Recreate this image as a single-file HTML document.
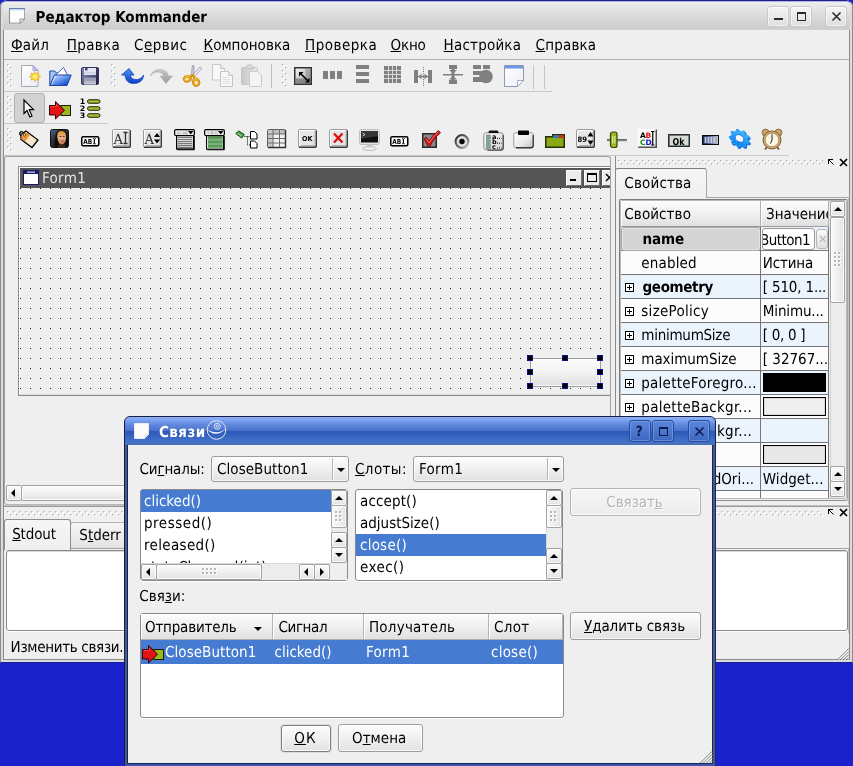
<!DOCTYPE html>
<html lang="ru"><head><meta charset="utf-8"><title>Редактор Kommander</title>
<style>
*{box-sizing:border-box;margin:0;padding:0}
html,body{width:853px;height:766px;overflow:hidden}
body{background:#1a22cc;font:15px "DejaVu Sans Condensed","DejaVu Sans","Liberation Sans",sans-serif;text-rendering:geometricPrecision;color:#000;position:relative}
#root{position:absolute;left:0;top:0;width:853px;height:766px;will-change:transform}
.a{position:absolute}
.t{position:absolute;white-space:nowrap;line-height:18px;height:18px}
u{text-decoration:underline;text-underline-offset:0.7px;text-decoration-thickness:1px}
.b{font-weight:bold}
.btn{position:absolute;border:1px solid #9c9c9c;border-radius:3px;background:linear-gradient(#fdfdfd,#f1f1f1 45%,#e2e2e2);box-shadow:inset 0 0 0 1px rgba(255,255,255,.75);text-align:center;white-space:nowrap}
.sb{position:absolute;border:1px solid #a2a2a2;border-radius:2px;background:linear-gradient(#fbfbfb,#e3e3e3);box-shadow:inset 0 0 0 1px rgba(255,255,255,.8)}
.sbh{position:absolute;border:1px solid #a2a2a2;border-radius:2px;background:linear-gradient(90deg,#fbfbfb,#e3e3e3);box-shadow:inset 0 0 0 1px rgba(255,255,255,.8)}
.tri{position:absolute;width:0;height:0;border-style:solid}
.hd{position:absolute;background:linear-gradient(#fcfcfc,#f0f0f0 50%,#e0e0e0);border-right:1px solid #b4b4b4;border-bottom:1px solid #b0b0b0;box-shadow:inset 1px 1px 0 #fff}
.sel{background:#4a7ac8;color:#fff}
.ic{position:absolute;overflow:visible}
</style></head>
<body>
<div id="root">
<svg class="a" width="0" height="0" style="left:0;top:0"><defs><pattern id="hp" width="6" height="6" patternUnits="userSpaceOnUse"><rect x="1" y="1" width="2" height="2" fill="#fdfdfd"/><rect x="0" y="0" width="1" height="1" fill="#b2b2b2"/><rect x="1" y="0" width="1" height="1" fill="#d4d4d4"/><rect x="0" y="1" width="1" height="1" fill="#d4d4d4"/><rect x="4" y="4" width="2" height="2" fill="#fdfdfd"/><rect x="3" y="3" width="1" height="1" fill="#b2b2b2"/><rect x="4" y="3" width="1" height="1" fill="#d4d4d4"/><rect x="3" y="4" width="1" height="1" fill="#d4d4d4"/></pattern></defs></svg>
<div class="a" style="left:0px;top:0px;width:853px;height:663px;background:#efefef;border-radius:7px 7px 0 0;overflow:hidden"></div>
<div class="a" style="left:0px;top:0px;width:853px;height:663px;border-radius:7px 7px 0 0;border:1px solid #8c8c8c;border-top-color:#20208c;border-bottom-color:#1c1c9c;pointer-events:none"></div>
<div class="a" style="left:1px;top:1px;width:851px;height:661px;border-radius:6px 6px 0 0;border:2px solid #dcdcdc;border-top:1px solid #b0b0e0"></div>
<div class="a" style="left:3px;top:30px;width:847px;height:630px;border:1px solid #8c8c8c;border-top:none"></div>
<div class="a" style="left:3px;top:2px;width:847px;height:28px;background:linear-gradient(#eef0f8,#e9ebea 8%,#e3e3e5 30%,#dcdcdc 45%,#d0d0d0 82%,#cdcdcd);border-radius:4px 4px 0 0"></div>
<div class="a" style="left:1px;top:29px;width:851px;height:1px;background:#d2d2d2"></div>
<svg class="ic" style="left:9px;top:8px" width="16" height="16" viewBox="0 0 16 16"><path d="M0.500 0.500h15v10.500l-4 4h-11z" fill="#fefefe" stroke="#a4a4a8"/><rect x="0" y="0" width="16" height="1" fill="#6c78b4"/><rect x="1" y="1" width="14" height="1.500" fill="#d0d8f4"/><path d="M15.500 11h-4.500v4.500z" fill="#e8e8f0" stroke="#8c8c94" stroke-width=".9"/><rect x="0" y="1" width="1" height="14.500" fill="#8a8a8a"/></svg>
<div class="t " style="left:35.5px;top:8px;font-weight:bold">Редактор Kommander</div>
<div class="a" style="left:767px;top:6px;width:22px;height:21px;border:1px solid #c9c9c9;border-radius:3px;background:linear-gradient(#f4f4f4,#dedede);box-shadow:inset 0 0 0 1px rgba(255,255,255,.6)"></div>
<svg class="ic" style="left:767.5px;top:6px" width="21" height="21" viewBox="0 0 21 21"><rect x="6" y="12" width="9" height="2" fill="#2a2a2a"/></svg>
<div class="a" style="left:790px;top:6px;width:22px;height:21px;border:1px solid #c9c9c9;border-radius:3px;background:linear-gradient(#f4f4f4,#dedede);box-shadow:inset 0 0 0 1px rgba(255,255,255,.6)"></div>
<svg class="ic" style="left:790.5px;top:6px" width="21" height="21" viewBox="0 0 21 21"><rect x="6.5" y="6.5" width="8" height="8" fill="none" stroke="#2a2a2a"/><rect x="6" y="6" width="9" height="2" fill="#2a2a2a"/></svg>
<div class="a" style="left:825px;top:6px;width:22px;height:21px;border:1px solid #c9c9c9;border-radius:3px;background:linear-gradient(#f4f4f4,#dedede);box-shadow:inset 0 0 0 1px rgba(255,255,255,.6)"></div>
<svg class="ic" style="left:825.5px;top:6px" width="21" height="21" viewBox="0 0 21 21"><path d="M6.5 6.5l8 8M14.5 6.5l-8 8" stroke="#2a2a2a" stroke-width="1.6"/></svg>
<div class="t " style="left:11px;top:35.5px;;letter-spacing:0.23px"><u>Ф</u>айл</div>
<div class="t " style="left:66.8px;top:35.5px;;letter-spacing:0.32px"><u>П</u>равка</div>
<div class="t " style="left:134px;top:35.5px;;letter-spacing:0.48px">С<u>е</u>рвис</div>
<div class="t " style="left:203.5px;top:35.5px;;letter-spacing:0.03px"><u>К</u>омпоновка</div>
<div class="t " style="left:305px;top:35.5px;;letter-spacing:0.50px"><u>П</u>роверка</div>
<div class="t " style="left:390.5px;top:35.5px;;letter-spacing:-0.17px"><u>О</u>кно</div>
<div class="t " style="left:443.6px;top:35.5px;;letter-spacing:0.21px"><u>Н</u>астройка</div>
<div class="t " style="left:535.6px;top:35.5px;;letter-spacing:0.17px"><u>С</u>правка</div>
<div class="a" style="left:4px;top:59px;width:845px;height:1px;background:#b2b2b2"></div>
<div class="a" style="left:4px;top:91px;width:548px;height:1px;background:#c8c8c8"></div>
<div class="a" style="left:4px;top:123px;width:104px;height:1px;background:#c8c8c8"></div>
<div class="a" style="left:4px;top:155px;width:785px;height:1px;background:#c8c8c8"></div>
<svg class="a" style="left:7px;top:64px" width="5" height="24"><rect width="5" height="24" fill="url(#hp)"/></svg>
<svg class="a" style="left:111px;top:64px" width="5" height="24"><rect width="5" height="24" fill="url(#hp)"/></svg>
<svg class="a" style="left:282px;top:64px" width="5" height="24"><rect width="5" height="24" fill="url(#hp)"/></svg>
<svg class="a" style="left:7px;top:96px" width="5" height="24"><rect width="5" height="24" fill="url(#hp)"/></svg>
<svg class="a" style="left:7px;top:128px" width="5" height="24"><rect width="5" height="24" fill="url(#hp)"/></svg>
<svg class="ic" style="left:21px;top:65px" width="19" height="22" viewBox="0 0 19 22"><defs><linearGradient id="pg" x1="0" y1="0" x2="1" y2="1"><stop offset="0" stop-color="#fff"/><stop offset="1" stop-color="#ececf6"/></linearGradient><radialGradient id="st" cx=".5" cy=".5" r=".5"><stop offset="0" stop-color="#fff8a0"/><stop offset=".55" stop-color="#f8d838"/><stop offset="1" stop-color="#eca820"/></radialGradient></defs><path d="M0.500 0.500h11.500l5 5v16h-16.500z" fill="url(#pg)" stroke="#a8a8b0"/><path d="M12 0.500v5h5z" fill="#c8c0f0" stroke="#9c94cc" stroke-width=".8"/><path d="M14 6.500l1.300 2.300l2.500-.800l-.300 2.600l2.300 1l-2.300 1l.300 2.600l-2.500-.800l-1.300 2.300l-1.300-2.300l-2.500 .800l.300-2.600l-2.300-1l2.300-1l-.300-2.600l2.500 .800z" fill="url(#st)" stroke="#e8a828" stroke-width=".6"/></svg>
<svg class="ic" style="left:49px;top:66px" width="23" height="21" viewBox="0 0 23 21"><defs><linearGradient id="fo" x1="0" y1="0" x2="1" y2="1"><stop offset="0" stop-color="#f4f8ff"/><stop offset=".45" stop-color="#6c9cf0"/><stop offset=".8" stop-color="#1c54d0"/><stop offset="1" stop-color="#1444b8"/></linearGradient></defs><path d="M0.800 19.500v-14.500h5l1.500 2h9.500v4" fill="#a4c4f4" stroke="#1c48a8" stroke-width="1"/><path d="M5.500 10l9-8.500l3.500 6.500v4z" fill="#fff" stroke="#2c58b8" stroke-width=".9"/><path d="M0.800 19.500l4.700-10.500h16.700l-4.200 10.500z" fill="url(#fo)" stroke="#1840a0" stroke-width="1"/><path d="M2.500 18.500l4-8.500" stroke="#fff" stroke-width=".8" opacity=".8"/></svg>
<svg class="ic" style="left:81px;top:67px" width="18" height="18" viewBox="0 0 18 18"><defs><linearGradient id="sv" x1="0" y1="0" x2="1" y2="1"><stop offset="0" stop-color="#8890b8"/><stop offset=".6" stop-color="#50587c"/><stop offset="1" stop-color="#1c1c44"/></linearGradient><linearGradient id="sh" x1="0" y1="0" x2="0" y2="1"><stop offset="0" stop-color="#9898b0"/><stop offset="1" stop-color="#d8d8e4"/></linearGradient></defs><rect x="0.500" y="0.500" width="17" height="17" rx="1.500" fill="url(#sv)" stroke="#34345c"/><rect x="3" y="1" width="12" height="7" fill="#e4e4f2"/><rect x="4" y="1" width="2.500" height="2.500" fill="#44446c"/><rect x="3" y="5.500" width="12" height="1" fill="#c4c4d8"/><rect x="3" y="10.500" width="12" height="7" fill="url(#sh)"/><rect x="3" y="12.500" width="12" height="1" fill="#8888a4"/><rect x="3" y="15" width="12" height="1" fill="#b0b0c4"/><rect x="15" y="1" width="2" height="16" fill="#1c1c44" opacity=".55"/></svg>
<svg class="ic" style="left:121px;top:68px" width="23" height="16" viewBox="0 0 23 16"><defs><linearGradient id="ud" x1="0" y1="0" x2="0" y2="1"><stop offset="0" stop-color="#4c94f4"/><stop offset="1" stop-color="#0c40c8"/></linearGradient></defs><path d="M0.500 7l7.500-6.500l5 6.500h-3.500c0 3 3 5 7 4.500c3-0.500 5-2.500 6-4.500c0 5-4 8.500-10 8.500c-5 0-8-3-8.500-8.500z" fill="url(#ud)" stroke="#1444b8" stroke-width=".8"/></svg>
<svg class="ic" style="left:150px;top:69px" width="23" height="15" viewBox="0 0 23 15"><defs><linearGradient id="rd" x1="0" y1="0" x2="0" y2="1"><stop offset="0" stop-color="#c8c8c8"/><stop offset="1" stop-color="#9c9c9c"/></linearGradient></defs><path d="M0.500 7c1-4 5-6.500 9.500-6.500c5 0 8 3 8.500 6.500h4l-6.500 7.500l-6-7.500h3.500c-.5-2.500-3-4-6-4c-3 0-5.500 1.500-7 4z" fill="url(#rd)" stroke="#b0b0b0" stroke-width=".6"/></svg>
<svg class="ic" style="left:183px;top:65px" width="19" height="22" viewBox="0 0 19 22"><path d="M9.300 0.500l1.700 .500l-.300 10l-2.200-.500z" fill="#dcdcec" stroke="#7c7ca0" stroke-width=".7"/><path d="M17.300 1.800l1.200 1.700l-7.500 8.500l-1.700-1.700z" fill="#f6f6ff" stroke="#7c7ca0" stroke-width=".7"/><path d="M9.800 10l-3.500 2.500M10.500 11l1.500 3" stroke="#d89810" stroke-width="2.600" stroke-linecap="round"/><ellipse cx="4.300" cy="13.800" rx="4" ry="3.300" fill="#eaa81c" stroke="#b87c0c" stroke-width=".8" transform="rotate(-15 4.300 13.800)"/><ellipse cx="13" cy="17.200" rx="3.700" ry="4.200" fill="#eaa81c" stroke="#b87c0c" stroke-width=".8" transform="rotate(-20 13 17.200)"/><ellipse cx="4" cy="14.200" rx="1.700" ry="1.200" fill="#fff0cc" transform="rotate(-15 4 14.200)"/><ellipse cx="13.300" cy="17.800" rx="1.400" ry="1.800" fill="#fff0cc" transform="rotate(-20 13.300 17.800)"/><path d="M2 12.500c1-1.500 3-2 4.500-1.500" stroke="#fcd870" stroke-width=".9" fill="none"/><path d="M10.500 15.500c.5-1.500 2-2.500 3.500-2.300" stroke="#fcd870" stroke-width=".9" fill="none"/></svg>
<svg class="ic" style="left:212px;top:64px" width="21" height="23" viewBox="0 0 21 23"><path d="M0.500 0.500h8l4 4v11.500h-12z" fill="#f8f8f8" stroke="#c8c8c8"/><path d="M8.500 0.500v4h4" fill="#e8e8e8" stroke="#c0c0c0" stroke-width=".8"/><path d="M8.500 7.500h8l4 4v11h-12z" fill="#f8f8f8" stroke="#c4c4c4"/><path d="M16.500 7.500v4h4" fill="#e8e8e8" stroke="#c0c0c0" stroke-width=".8"/><path d="M10.500 13.500h6M10.500 15.500h8M10.500 17.500h8M10.500 19.500h8" stroke="#e0e0e0"/></svg>
<svg class="ic" style="left:241px;top:64px" width="21" height="23" viewBox="0 0 21 23"><defs><linearGradient id="ps" x1="0" y1="0" x2="1" y2="0"><stop offset="0" stop-color="#c8c8c8"/><stop offset="1" stop-color="#e8e8e8"/></linearGradient></defs><rect x="0.500" y="3.500" width="16" height="17" rx="1" fill="url(#ps)" stroke="#c4c4c4"/><path d="M4.500 4.500c0-5 8-5 8 0z" fill="#dcdcdc" stroke="#c0c0c0"/><path d="M8.500 7.500h8l4 4v11h-12z" fill="#f4f4f4" stroke="#cccccc"/></svg>
<div class="a" style="left:271px;top:64px;width:1px;height:24px;background:#c0c0c0"></div>
<svg class="ic" style="left:294px;top:67px" width="18" height="18" viewBox="0 0 18 18"><defs><linearGradient id="az" x1="0" y1="0" x2="1" y2="1"><stop offset="0" stop-color="#f8f8f8"/><stop offset=".6" stop-color="#c0c0c0"/><stop offset="1" stop-color="#6c6c6c"/></linearGradient></defs><rect x="0.750" y="0.750" width="16.500" height="16.500" fill="url(#az)" stroke="#303030" stroke-width="1.500"/><rect x="1.500" y="11.500" width="15" height="5" fill="#7c7c7c" opacity=".85"/><rect x="11.500" y="1.500" width="5" height="10" fill="#909090" opacity=".6"/><path d="M6.500 6.500l7.500 7.500" stroke="#000" stroke-width="1.600"/><path d="M5 5h4.500l-4.500 4.500zM15.500 15.500h-4.500l4.500-4.500z" fill="#000"/></svg>
<div class="a" style="left:323px;top:71px;width:5px;height:8px;background:#808080"></div>
<div class="a" style="left:330px;top:71px;width:5px;height:8px;background:#808080"></div>
<div class="a" style="left:337px;top:71px;width:5px;height:8px;background:#808080"></div>
<div class="a" style="left:356px;top:65px;width:13px;height:4px;background:#808080"></div>
<div class="a" style="left:356px;top:72px;width:13px;height:4px;background:#808080"></div>
<div class="a" style="left:356px;top:79px;width:13px;height:4px;background:#808080"></div>
<svg class="ic" style="left:384px;top:66px" width="18" height="18" viewBox="0 0 18 18"><rect width="17" height="17" fill="#808080"/><path d="M4.500 0v17M8.500 0v17M12.500 0v17M0 4.500h17M0 8.500h17M0 12.500h17" stroke="#d8d8d8" stroke-width="1"/></svg>
<svg class="ic" style="left:414px;top:66px" width="19" height="22" viewBox="0 0 19 22"><rect x="0" y="4" width="4" height="13" fill="#808080"/><rect x="14" y="4" width="4" height="13" fill="#808080"/><path d="M4 10.500h10" stroke="#808080" stroke-width="1.500"/><path d="M4.500 10.500l3-3v6zM13.500 10.500l-3-3v6z" fill="#808080"/><path d="M9.500 1v20" stroke="#808080" stroke-dasharray="1 1"/></svg>
<svg class="ic" style="left:443px;top:65px" width="20" height="19" viewBox="0 0 20 19"><rect x="6" y="0" width="8" height="4" fill="#808080"/><rect x="6" y="15" width="8" height="4" fill="#808080"/><rect x="0" y="9" width="20" height="1.500" fill="#808080"/><path d="M10 8.500l-4-3.500h8zM10 11l-4 3.500h8z" fill="#808080"/><rect x="8.500" y="3" width="3" height="13" fill="#808080"/></svg>
<svg class="ic" style="left:473px;top:65px" width="20" height="20" viewBox="0 0 20 20"><rect x="0" y="0" width="8" height="4" fill="#808080"/><rect x="10" y="0" width="7" height="4" fill="#808080"/><rect x="0" y="6" width="11" height="4" fill="#808080"/><rect x="0" y="12" width="9" height="5" fill="#808080"/><circle cx="13" cy="11.500" r="6.800" fill="#808080"/></svg>
<svg class="ic" style="left:504px;top:65px" width="20" height="22" viewBox="0 0 20 22"><defs><linearGradient id="wn" x1="0" y1="0" x2="1" y2="1"><stop offset="0" stop-color="#fff"/><stop offset="1" stop-color="#eeeef6"/></linearGradient></defs><path d="M0.500 0.500h19v15l-6 6h-13z" fill="url(#wn)" stroke="#8c98b8"/><rect x="1" y="1" width="18" height="2.500" fill="#6c98ec"/><path d="M19.500 15.500h-6v6z" fill="#fff" stroke="#8c98b8" stroke-width=".8"/></svg>
<div class="a" style="left:533px;top:65px;width:1px;height:24px;background:#c4c4c4"></div>
<div class="a" style="left:544px;top:65px;width:1px;height:24px;background:#c4c4c4"></div>
<div class="a" style="left:14px;top:93px;width:31px;height:30px;background:#d2d2d2;border:1px solid #b2b2b2;border-radius:3px"></div>
<svg class="ic" style="left:23px;top:99px" width="12" height="20" viewBox="0 0 12 20"><path d="M1 1v13.500l3-3l2.800 6.500l2.200-1l-2.800-6.300h4.300z" fill="#fff" stroke="#000" stroke-width="1.200" stroke-linejoin="miter"/></svg>
<svg class="ic" style="left:49px;top:101px" width="22" height="19" viewBox="0 0 22 19"><rect x="12" y="4.500" width="9.500" height="10" fill="#98b820" stroke="#181c00"/><path d="M0.500 4.500h6v-4l9 8.750l-9 8.750v-4h-6z" fill="#e41414" stroke="#300000" stroke-linejoin="round"/><path d="M1.500 5.500h6v-3" stroke="#ff7070" stroke-width=".8" fill="none" opacity=".7"/></svg>
<svg class="ic" style="left:80px;top:98px" width="21" height="21" viewBox="0 0 21 21"><rect x="7.500" y="1.75" width="12.500" height="3.500" rx="1.750" fill="#a4c038" stroke="#181c00" stroke-width="1"/><text x="-0.300" y="6.2" font-family="DejaVu Sans,Liberation Sans,sans-serif" font-weight="bold" font-size="7.500" fill="#000" textLength="5.500" lengthAdjust="spacingAndGlyphs">1</text><rect x="7.500" y="8.75" width="12.500" height="3.500" rx="1.750" fill="#a4c038" stroke="#181c00" stroke-width="1"/><text x="-0.300" y="13.2" font-family="DejaVu Sans,Liberation Sans,sans-serif" font-weight="bold" font-size="7.500" fill="#000" textLength="5.500" lengthAdjust="spacingAndGlyphs">2</text><rect x="7.500" y="15.75" width="12.500" height="3.500" rx="1.750" fill="#a4c038" stroke="#181c00" stroke-width="1"/><text x="-0.300" y="20.2" font-family="DejaVu Sans,Liberation Sans,sans-serif" font-weight="bold" font-size="7.500" fill="#000" textLength="5.500" lengthAdjust="spacingAndGlyphs">3</text></svg>
<svg class="ic" style="left:18px;top:129px" width="22" height="20" viewBox="0 0 22 20"><path d="M3 5.500l5-3.500l12 9l-6 7.500l-11-8z" fill="#f8e8c8" stroke="#000" stroke-width="1.300"/><path d="M3.500 6l4.500-3l4 3l-5 6.500l-3.500-2.500z" fill="#e89838"/><path d="M6 4c-3-3-6 0-3 3" fill="none" stroke="#000" stroke-width="1.200"/><circle cx="6.500" cy="6" r="1.100" fill="#fff" stroke="#000" stroke-width=".6"/></svg>
<svg class="ic" style="left:50px;top:129px" width="19" height="19" viewBox="0 0 19 19"><defs><linearGradient id="ml" x1="0" y1="0" x2="1" y2="1"><stop offset="0" stop-color="#4c6c98"/><stop offset=".35" stop-color="#2c3038"/><stop offset="1" stop-color="#0c0c0c"/></linearGradient><linearGradient id="mf" x1="0" y1="0" x2="0" y2="1"><stop offset="0" stop-color="#d09838"/><stop offset=".5" stop-color="#ecb488"/><stop offset="1" stop-color="#b87850"/></linearGradient></defs><rect x="0.500" y="0.500" width="18" height="18" rx="2" fill="url(#ml)" stroke="#101010"/><path d="M4.500 18c0-7 1-10 1.500-13c1-5 9-5 10.500 0c.5 4 1.500 8 1.500 13z" fill="#140c08"/><path d="M8 3.500c2-2 6-2 7.500 1c1 3 .5 7-1 9.500c-1.500 2-4 2-5.500 0c-1.500-3-2.500-8-1-10.500z" fill="url(#mf)"/><path d="M9.500 7.500h2M13 7.500h1.700" stroke="#503018" stroke-width=".9"/><path d="M11 12h3" stroke="#904838" stroke-width=".8"/><path d="M8 15.500c2 1.500 5 1.500 7 0v3h-7z" fill="#4c2c18"/></svg>
<svg class="ic" style="left:81px;top:136px" width="19" height="11" viewBox="0 0 19 11"><rect x="1" y="1" width="17.500" height="9.500" rx="1.500" fill="#888" opacity=".5"/><rect x="0.750" y="0.750" width="17" height="9" rx="1.500" fill="#fff" stroke="#000" stroke-width="1.500"/><text x="2.300" y="8" font-family="DejaVu Sans,Liberation Sans,sans-serif" font-size="6.800" font-weight="bold" fill="#000" textLength="9" lengthAdjust="spacingAndGlyphs">AB</text><path d="M12 2.500c.8 0 1.300 .3 1.300 1v3.500c0 .7-.5 1-1.300 1M14.800 2.500c-.8 0-1.300 .3-1.300 1v3.500c0 .7 .5 1 1.300 1" stroke="#000" stroke-width=".9" fill="none"/></svg>
<svg class="ic" style="left:112px;top:129px" width="19" height="19" viewBox="0 0 19 19"><rect x="0.500" y="0.500" width="18" height="18" rx="1.500" fill="#e6e6e6" stroke="#9a9a9a"/><path d="M1.500 16.5v-15h15" fill="none" stroke="#fff"/><path d="M18.25 1.500v15.5q0 1.250 -1.250 1.250h-16" fill="none" stroke="#383838" stroke-width="1.500"/><path d="M17 2.500v14h-14" fill="none" stroke="#b0b0b0"/><text x="1.500" y="14.500" font-family="DejaVu Serif,Liberation Serif,serif" font-size="14" fill="#303030" textLength="9.500" lengthAdjust="spacingAndGlyphs">A</text><path d="M11.500 3.500h4M11.500 14.500h4M13.500 3.500v11" stroke="#303030" stroke-width="1.300"/></svg>
<svg class="ic" style="left:143px;top:129px" width="19" height="19" viewBox="0 0 19 19"><rect x="0.500" y="0.500" width="18" height="18" rx="1.500" fill="#e6e6e6" stroke="#9a9a9a"/><path d="M1.500 16.5v-15h15" fill="none" stroke="#fff"/><path d="M18.25 1.500v15.5q0 1.250 -1.250 1.250h-16" fill="none" stroke="#383838" stroke-width="1.500"/><path d="M17 2.500v14h-14" fill="none" stroke="#b0b0b0"/><text x="1.500" y="14.500" font-family="DejaVu Serif,Liberation Serif,serif" font-size="14" fill="#303030" textLength="9.500" lengthAdjust="spacingAndGlyphs">A</text><path d="M14 4l3 4h-6zM14 14.500l3-4h-6z" fill="#000"/></svg>
<svg class="ic" style="left:174px;top:129px" width="21" height="21" viewBox="0 0 21 21"><defs><linearGradient id="cbg" x1="0" y1="0" x2="0" y2="1"><stop offset="0" stop-color="#f0f0f0"/><stop offset="1" stop-color="#b8b8b8"/></linearGradient></defs><rect x="2.600" y="6" width="17" height="14" fill="url(#cbg)" stroke="#000" stroke-width="1.200"/><path d="M20.250 7v13.750h-17" stroke="#000" stroke-width="1" fill="none"/><path d="M4 8.5h14" stroke="#787878" stroke-width="1"/><path d="M4 10.5h14" stroke="#787878" stroke-width="1"/><path d="M4 12.5h14" stroke="#787878" stroke-width="1"/><path d="M4 14.5h14" stroke="#787878" stroke-width="1"/><path d="M4 16.5h14" stroke="#787878" stroke-width="1"/><path d="M4 18.5h14" stroke="#787878" stroke-width="1"/><rect x="0.600" y="0.600" width="19.800" height="6" rx="1.500" fill="#ececec" stroke="#000" stroke-width="1.200"/><path d="M14 2h5.500l-2.750 3.600z" fill="#000"/><path d="M13 1.500v4.500" stroke="#b0b0b0" stroke-width=".7"/><path d="M3 5h2M4 2.500v2.500M6.500 3v2M8.500 5h2.500M8.500 3.500h2M11.500 2.500v2.500h1" stroke="#a0a0a0" stroke-width=".7" fill="none"/></svg>
<svg class="ic" style="left:204px;top:129px" width="21" height="21" viewBox="0 0 21 21"><defs><linearGradient id="cbg2" x1="0" y1="0" x2="0" y2="1"><stop offset="0" stop-color="#f0f0f0"/><stop offset="1" stop-color="#b8b8b8"/></linearGradient></defs><rect x="2.600" y="6" width="17" height="14" fill="url(#cbg2)" stroke="#000" stroke-width="1.200"/><path d="M20.250 7v13.750h-17" stroke="#000" stroke-width="1" fill="none"/><rect x="3" y="6.750" width="16" height="12.750" fill="#cceacc"/><rect x="4" y="7.6" width="14.500" height="3.200" fill="#62a062"/><rect x="4" y="7.6" width="14.500" height="1" fill="#4c8c4c"/><rect x="4" y="11.6" width="14.500" height="3.200" fill="#62a062"/><rect x="4" y="11.6" width="14.500" height="1" fill="#4c8c4c"/><rect x="4" y="15.6" width="14.500" height="3.200" fill="#62a062"/><rect x="4" y="15.6" width="14.500" height="1" fill="#4c8c4c"/><rect x="0.600" y="0.600" width="19.800" height="6" rx="1.500" fill="#ececec" stroke="#000" stroke-width="1.200"/><path d="M14 2h5.500l-2.750 3.600z" fill="#000"/><path d="M13 1.500v4.500" stroke="#b0b0b0" stroke-width=".7"/><path d="M5 2.500l-1.500 1.200l1.500 1.200M7 2.800h2v2.200h-2zM11 2.500v3" stroke="#a0a0a0" stroke-width=".7" fill="none"/></svg>
<svg class="ic" style="left:235px;top:130px" width="23" height="19" viewBox="0 0 23 19"><path d="M0.800 3.500l3-2.500l5.500 3.500l-2.500 3.500z" fill="#48a848" stroke="#104810" stroke-width="1"/><path d="M2.500 3.500l4 2.500" stroke="#c8f0c8" stroke-width=".8"/><path d="M9.500 6.500h5.500M12.500 6.500v8.500h3" stroke="#000" stroke-dasharray="1 1" fill="none"/><path d="M15.500 1.500h4l2.500 2.500v5h-6.500z" fill="#fff" stroke="#000" stroke-width="1"/><path d="M15.500 11h4l2.500 2.500v4.500h-6.500z" fill="#fff" stroke="#000" stroke-width="1"/></svg>
<svg class="ic" style="left:267px;top:129px" width="19" height="19" viewBox="0 0 19 19"><rect x="0.500" y="0.500" width="18" height="18" rx="1" fill="#f2f2f2" stroke="#606060"/><rect x="1" y="1" width="17" height="4" fill="#c0c0c0"/><rect x="1" y="1" width="5" height="17" fill="#c8c8c8"/><path d="M6 0.500v18M12.500 0.500v18M0.500 5h18M0.500 9.500h18M0.500 14h18" stroke="#6c6c6c" stroke-width="1"/><path d="M18.500 1v17.500h-17.500" stroke="#303030" stroke-width="1.400" fill="none"/></svg>
<svg class="ic" style="left:298px;top:129px" width="19" height="19" viewBox="0 0 19 19"><rect x="0.500" y="0.500" width="18" height="18" rx="1.500" fill="#e6e6e6" stroke="#9a9a9a"/><path d="M1.500 16.5v-15h15" fill="none" stroke="#fff"/><path d="M18.25 1.500v15.5q0 1.250 -1.250 1.250h-16" fill="none" stroke="#383838" stroke-width="1.500"/><path d="M17 2.500v14h-14" fill="none" stroke="#b0b0b0"/><text x="4" y="12.300" font-family="DejaVu Sans,Liberation Sans,sans-serif" font-size="6.800" font-weight="bold" fill="#000" textLength="10.500" lengthAdjust="spacingAndGlyphs">OK</text></svg>
<svg class="ic" style="left:329px;top:129px" width="19" height="19" viewBox="0 0 19 19"><rect x="0.500" y="0.500" width="18" height="18" rx="1.500" fill="#e6e6e6" stroke="#9a9a9a"/><path d="M1.500 16.5v-15h15" fill="none" stroke="#fff"/><path d="M18.25 1.500v15.5q0 1.250 -1.250 1.250h-16" fill="none" stroke="#383838" stroke-width="1.500"/><path d="M17 2.500v14h-14" fill="none" stroke="#b0b0b0"/><path d="M5 4.500l8.500 9M13.500 4.500l-8.500 9" stroke="#e00808" stroke-width="2.200"/></svg>
<svg class="ic" style="left:359px;top:129px" width="21" height="22" viewBox="0 0 21 22"><rect x="0.500" y="0.500" width="20" height="15" rx="2" fill="#e4e4e4" stroke="#c0c0c0"/><rect x="2" y="2" width="17" height="11.500" fill="#101010"/><path d="M2 2h17v5l-17 3z" fill="#404040" opacity=".8"/><path d="M3.500 4l2.500 1.500l-2.500 1.500" stroke="#f0f0f0" stroke-width=".8" fill="none"/><rect x="8" y="15.500" width="5" height="2.500" fill="#c8c8c8"/><ellipse cx="10.500" cy="19.500" rx="7" ry="2" fill="#ececec" stroke="#c0c0c0"/></svg>
<svg class="ic" style="left:390px;top:136px" width="19" height="11" viewBox="0 0 19 11"><rect x="1" y="1" width="17.500" height="9.500" rx="1.500" fill="#888" opacity=".5"/><rect x="0.750" y="0.750" width="17" height="9" rx="1.500" fill="#fff" stroke="#000" stroke-width="1.500"/><text x="2.300" y="8" font-family="DejaVu Sans,Liberation Sans,sans-serif" font-size="6.800" font-weight="bold" fill="#000" textLength="9" lengthAdjust="spacingAndGlyphs">AB</text><path d="M12 2.500c.8 0 1.300 .3 1.300 1v3.500c0 .7-.5 1-1.300 1M14.800 2.500c-.8 0-1.300 .3-1.300 1v3.500c0 .7 .5 1 1.300 1" stroke="#000" stroke-width=".9" fill="none"/></svg>
<svg class="ic" style="left:422px;top:129px" width="20" height="20" viewBox="0 0 20 20"><rect x="0.750" y="4.750" width="13.500" height="13.500" fill="#8a8a8a" stroke="#282828" stroke-width="1.500"/><path d="M2.200 9.800l2.300-1.600l2.700 3.800c2.500-4.200 5.500-7.600 9.300-10.400l2 2.300c-4.200 3.200-7.800 7.800-10.500 13.300l-1.800 .300z" fill="#e01c1c" stroke="#680000" stroke-width=".8" stroke-linejoin="round"/><path d="M4.300 9.800l3 4c2.500-4.500 5.500-8 8.800-10.500" stroke="#ff8a8a" stroke-width=".9" fill="none" opacity=".8"/></svg>
<svg class="ic" style="left:454px;top:134px" width="16" height="15" viewBox="0 0 16 15"><defs><linearGradient id="rb" x1="0" y1="0" x2="1" y2="1"><stop offset="0" stop-color="#303030"/><stop offset=".6" stop-color="#707070"/><stop offset="1" stop-color="#c4c4c4"/></linearGradient></defs><circle cx="8" cy="7.500" r="6.400" fill="#dcdcdc" stroke="url(#rb)" stroke-width="2"/><circle cx="8" cy="7.500" r="2.700" fill="#000"/></svg>
<svg class="ic" style="left:483px;top:130px" width="21" height="21" viewBox="0 0 21 21"><defs><linearGradient id="bg6" x1="0" y1="0" x2="1" y2="1"><stop offset="0" stop-color="#fafafa"/><stop offset="1" stop-color="#d0d4d0"/></linearGradient></defs><rect x="0.750" y="2.750" width="19.500" height="17" rx="2.500" fill="url(#bg6)" stroke="#8a8a8a" stroke-width="1"/><path d="M20.250 5v12.500q0 2.750 -2.750 2.750h-13" fill="none" stroke="#484848" stroke-width="1.200"/><path d="M5.500 3c0-2.500 1-2.500 2-2.500h6c1 0 2 0 2 2.500z" fill="#101010"/><rect x="3.300" y="5" width="4" height="3.800" fill="#84a494" stroke="#587868" stroke-width=".5"/><text x="9" y="8.9" font-family="DejaVu Sans,Liberation Sans,sans-serif" font-size="6.500" font-weight="bold" fill="#000">a</text><path d="M14 8.4h4.500" stroke="#000" stroke-dasharray="1 1"/><rect x="3.300" y="9.8" width="4" height="3.800" fill="#84a494" stroke="#587868" stroke-width=".5"/><text x="9" y="13.7" font-family="DejaVu Sans,Liberation Sans,sans-serif" font-size="6.500" font-weight="bold" fill="#000">b</text><path d="M14 13.2h4.500" stroke="#000" stroke-dasharray="1 1"/><rect x="3.300" y="14.6" width="4" height="3.800" fill="#84a494" stroke="#587868" stroke-width=".5"/><text x="9" y="18.5" font-family="DejaVu Sans,Liberation Sans,sans-serif" font-size="6.500" font-weight="bold" fill="#000">c</text><path d="M14 18h4.500" stroke="#000" stroke-dasharray="1 1"/></svg>
<svg class="ic" style="left:513px;top:130px" width="21" height="19" viewBox="0 0 21 19"><defs><linearGradient id="gb" x1="0" y1="0" x2="1" y2="1"><stop offset="0" stop-color="#ffffff"/><stop offset=".6" stop-color="#e8e8e8"/><stop offset="1" stop-color="#b8b8b8"/></linearGradient></defs><rect x="0.750" y="2.750" width="19.500" height="15" rx="2" fill="url(#gb)" stroke="#9a9a9a" stroke-width="1"/><path d="M20.250 5v10.500q0 2.250 -2.250 2.250h-15" fill="none" stroke="#383838" stroke-width="1.300"/><rect x="5" y="0.500" width="11" height="4.500" rx=".8" fill="#000"/></svg>
<svg class="ic" style="left:545px;top:134px" width="20" height="14" viewBox="0 0 20 14"><path d="M0.750 2.750h7v-2h11.500v12.500h-18.500z" fill="#88a818" stroke="#283000" stroke-width="1.500"/><rect x="8.500" y="1" width="5" height="3" fill="#2878d8"/><rect x="13.500" y="1" width="5" height="3" fill="#c83018"/></svg>
<svg class="ic" style="left:576px;top:129px" width="19" height="19" viewBox="0 0 19 19"><rect x="0.500" y="0.500" width="18" height="18" rx="1.500" fill="#e6e6e6" stroke="#9a9a9a"/><path d="M1.500 16.5v-15h15" fill="none" stroke="#fff"/><path d="M18.25 1.500v15.5q0 1.250 -1.250 1.250h-16" fill="none" stroke="#383838" stroke-width="1.500"/><path d="M17 2.500v14h-14" fill="none" stroke="#b0b0b0"/><text x="1.500" y="12.500" font-family="DejaVu Sans,Liberation Sans,sans-serif" font-size="7.500" font-weight="bold" fill="#000" textLength="9.500" lengthAdjust="spacingAndGlyphs">89</text><path d="M14.500 3l3 4.500h-6zM14.500 16l3-4.500h-6z" fill="#000"/></svg>
<svg class="ic" style="left:607px;top:131px" width="20" height="18" viewBox="0 0 20 18"><path d="M0 9h20" stroke="#202020" stroke-width="1.300"/><path d="M0 10h20" stroke="#b0b0b0" stroke-width="1"/><rect x="3.500" y="1" width="6.500" height="15.500" rx="2" fill="#98b828" stroke="#384800" stroke-width="1.200"/><path d="M5.700 5v7.500M7.800 5v7.500" stroke="#e8f4a0" stroke-width="1"/></svg>
<svg class="ic" style="left:638px;top:129px" width="19" height="19" viewBox="0 0 19 19"><rect x="0.500" y="0.500" width="18" height="18" fill="#f8f8f8" stroke="#fff"/><path d="M18.250 0.500v17.750h-18" fill="none" stroke="#505050" stroke-width="1.500"/><text x="2" y="8.500" font-family="DejaVu Sans,Liberation Sans,sans-serif" font-size="7.500" font-weight="bold" fill="#000">A</text><text x="7.500" y="8.500" font-family="DejaVu Sans,Liberation Sans,sans-serif" font-size="7.500" font-weight="bold" fill="#e01010">B</text><text x="2" y="16" font-family="DejaVu Sans,Liberation Sans,sans-serif" font-size="7.500" font-weight="bold" fill="#109010">C</text><text x="7.500" y="16" font-family="DejaVu Sans,Liberation Sans,sans-serif" font-size="7.500" font-weight="bold" fill="#1010d0">D</text><path d="M13 2.500h3.500M13 16h3.500M14.750 2.500v13.500" stroke="#000" stroke-width="1.200"/></svg>
<svg class="ic" style="left:668px;top:134px" width="22" height="13" viewBox="0 0 22 13"><rect x="0.750" y="0.750" width="20.500" height="11.500" fill="#d4dcd4" stroke="#283028" stroke-width="1.500"/><path d="M1.500 11.500v-10h19" stroke="#707870" fill="none"/><text x="4.500" y="10.500" font-family="DejaVu Sans,Liberation Sans,sans-serif" font-size="9.500" font-weight="bold" fill="#000" textLength="12" lengthAdjust="spacingAndGlyphs">Ok</text></svg>
<svg class="ic" style="left:702px;top:135px" width="17" height="10" viewBox="0 0 17 10"><defs><linearGradient id="pb" x1="0" y1="0" x2="1" y2="0"><stop offset="0" stop-color="#182858"/><stop offset=".55" stop-color="#6878a0"/><stop offset="1" stop-color="#c8c8cc"/></linearGradient></defs><rect x="0.500" y="0.500" width="16" height="9" fill="url(#pb)" stroke="#080810"/><rect x="2.6" y="2" width="1.800" height="6" fill="#c4cce0"/><rect x="5.5" y="2" width="1.800" height="6" fill="#c4cce0"/><rect x="8.4" y="2" width="1.800" height="6" fill="#c4cce0"/><rect x="11.3" y="2" width="1.800" height="6" fill="#c4cce0"/></svg>
<svg class="ic" style="left:729px;top:129px" width="22" height="20" viewBox="0 0 22 20"><defs><linearGradient id="gr" x1="0" y1="0" x2="0" y2="1"><stop offset="0" stop-color="#48c0ff"/><stop offset="1" stop-color="#1078e8"/></linearGradient></defs><g transform="translate(11.500 10.800) rotate(28) scale(1 .8)"><polygon points="10.44 -1.84 10.60 0.00 8.08 1.42 7.71 2.80 9.18 5.30 8.12 6.81 5.27 6.28 4.10 7.10 3.63 9.96 1.84 10.44 0.00 8.20 -1.42 8.08 -3.63 9.96 -5.30 9.18 -5.27 6.28 -6.28 5.27 -9.18 5.30 -9.96 3.63 -8.08 1.42 -8.20 0.00 -10.44 -1.84 -9.96 -3.63 -7.10 -4.10 -6.28 -5.27 -6.81 -8.12 -5.30 -9.18 -2.80 -7.71 -1.42 -8.08 -0.00 -10.60 1.84 -10.44 2.80 -7.71 4.10 -7.10 6.81 -8.12 8.12 -6.81 7.10 -4.10 7.71 -2.80" fill="#0c6cdc" stroke="#0c6cdc" stroke-width="1" stroke-linejoin="round"/></g><g transform="translate(10.500 9.400) rotate(28) scale(1 .8)"><polygon points="10.44 -1.84 10.60 0.00 8.08 1.42 7.71 2.80 9.18 5.30 8.12 6.81 5.27 6.28 4.10 7.10 3.63 9.96 1.84 10.44 0.00 8.20 -1.42 8.08 -3.63 9.96 -5.30 9.18 -5.27 6.28 -6.28 5.27 -9.18 5.30 -9.96 3.63 -8.08 1.42 -8.20 0.00 -10.44 -1.84 -9.96 -3.63 -7.10 -4.10 -6.28 -5.27 -6.81 -8.12 -5.30 -9.18 -2.80 -7.71 -1.42 -8.08 -0.00 -10.60 1.84 -10.44 2.80 -7.71 4.10 -7.10 6.81 -8.12 8.12 -6.81 7.10 -4.10 7.71 -2.80" fill="url(#gr)" stroke="#20a0f8" stroke-width="1" stroke-linejoin="round"/><ellipse cx="0" cy="0" rx="4.600" ry="4.200" fill="#f4faff" stroke="#0c68d8" stroke-width=".8"/></g></svg>
<svg class="ic" style="left:761px;top:128px" width="22" height="23" viewBox="0 0 22 23"><circle cx="4.500" cy="4.500" r="3.500" fill="#c8a468" stroke="#806030" stroke-width=".8"/><circle cx="17.500" cy="4.500" r="3.500" fill="#c8a468" stroke="#806030" stroke-width=".8"/><path d="M4 21.500l3-4M18 21.500l-3-4" stroke="#806030" stroke-width="2"/><circle cx="11" cy="12" r="9" fill="#c8a870" stroke="#806030" stroke-width="1"/><circle cx="11" cy="12" r="6.800" fill="#fcf4e4" stroke="#a08050" stroke-width=".7"/><path d="M11 12v-5.500M11 12l-1.500 3.500" stroke="#202020" stroke-width="1" fill="none"/></svg>
<div class="a" style="left:4px;top:156px;width:607px;height:349px;border:1px solid #a2a2a2;border-radius:3px;border-bottom-color:#b8b8b8;background:#efefef"></div>
<div class="a" style="left:5px;top:157px;width:605px;height:328px;overflow:hidden">
<div class="a" style="left:13px;top:9px;width:620px;height:230px;border:1px solid #8c8c8c;background:#efefef"></div>
<div class="a" style="left:14px;top:10px;width:618px;height:228px;border:1px solid #fff;border-bottom-color:#dcdcdc;border-right-color:#dcdcdc"></div>
<div class="a" style="left:15px;top:11px;width:600px;height:20px;background:#555555"></div>
<svg class="a" style="left:15px;top:31px" width="600" height="207"><defs><pattern id="dots" width="10" height="10" patternUnits="userSpaceOnUse"><rect x="0" y="0" width="1" height="1" fill="#1c1c1c"/></pattern></defs><rect width="600" height="207" fill="url(#dots)"/></svg>
<svg class="ic" style="left:18px;top:13px" width="16" height="15" viewBox="0 0 16 15"><rect x="0.5" y="0.5" width="15" height="14" fill="#fff" stroke="#18186c"/><rect x="1" y="1" width="14" height="3" fill="#18186c"/><rect x="4" y="1.6" width="8" height="1" fill="#fff"/></svg>
<div class="t" style="left:37px;top:12px;color:#e4e4e4;letter-spacing:0.32px">Form1</div>
<div class="a" style="left:561px;top:13px;width:16px;height:16px;background:#ececec;border:1px solid #fff;border-right-color:#707070;border-bottom-color:#707070"></div>
<svg class="ic" style="left:561px;top:13px" width="16" height="16" viewBox="0 0 16 16"><rect x="4" y="9" width="6" height="2" fill="#000"/></svg>
<div class="a" style="left:579px;top:13px;width:16px;height:16px;background:#ececec;border:1px solid #fff;border-right-color:#707070;border-bottom-color:#707070"></div>
<svg class="ic" style="left:579px;top:13px" width="16" height="16" viewBox="0 0 16 16"><rect x="3.5" y="4.5" width="9" height="7" fill="none" stroke="#000"/><rect x="3" y="3" width="10" height="2" fill="#000"/></svg>
<div class="a" style="left:597px;top:13px;width:16px;height:16px;background:#ececec;border:1px solid #fff;border-right-color:#707070;border-bottom-color:#707070"></div>
<svg class="ic" style="left:597px;top:13px" width="16" height="16" viewBox="0 0 16 16"><path d="M4 4l7 7M11 4l-7 7" stroke="#000" stroke-width="1.5"/></svg>
<div class="a" style="left:525px;top:201px;width:71px;height:29px;border:1px solid #9c9c9c;background:linear-gradient(#fdfdfd,#f2f2f2 50%,#e0e0e0);box-shadow:inset 0 0 0 1px rgba(255,255,255,.7)"></div>
<div class="a" style="left:522px;top:198px;width:6px;height:6px;background:#000;border:1px solid #10108c"></div>
<div class="a" style="left:522px;top:212px;width:6px;height:6px;background:#000;border:1px solid #10108c"></div>
<div class="a" style="left:522px;top:226px;width:6px;height:6px;background:#000;border:1px solid #10108c"></div>
<div class="a" style="left:557px;top:198px;width:6px;height:6px;background:#000;border:1px solid #10108c"></div>
<div class="a" style="left:557px;top:226px;width:6px;height:6px;background:#000;border:1px solid #10108c"></div>
<div class="a" style="left:592px;top:198px;width:6px;height:6px;background:#000;border:1px solid #10108c"></div>
<div class="a" style="left:592px;top:212px;width:6px;height:6px;background:#000;border:1px solid #10108c"></div>
<div class="a" style="left:592px;top:226px;width:6px;height:6px;background:#000;border:1px solid #10108c"></div>
</div>
<div class="a" style="left:5px;top:485px;width:605px;height:17px;background:repeating-conic-gradient(#e5e5e5 0% 25%,#f3f3f3 0% 50%) 0 0/2px 2px"></div>
<div class="sb" style="left:6px;top:485px;width:16px;height:16px"></div>
<div class="tri" style="left:11px;top:489px;border-width:4px 4px 4px 0;border-color:transparent #000 transparent transparent"></div>
<div class="sb" style="left:21px;top:485px;width:420px;height:16px;background:linear-gradient(#fcfcfc,#e4e4e4)"></div>
<div class="a" style="left:615px;top:156px;width:1px;height:348px;background:#8a8a8a"></div>
<svg class="a" style="left:618px;top:160px" width="205" height="5"><rect width="205" height="5" fill="url(#hp)"/></svg>
<svg class="ic" style="left:827px;top:158px" width="8" height="8" viewBox="0 0 8 8"><path d="M1.5 6V1.5H6M1.5 1.5L6.5 6.5" stroke="#000" stroke-width="1" fill="none"/></svg>
<svg class="ic" style="left:839px;top:158px" width="9" height="9" viewBox="0 0 9 9"><path d="M1 1l7 7M8 1l-7 7" stroke="#000" stroke-width="1.7" fill="none"/></svg>
<div class="a" style="left:615px;top:168px;width:92px;height:30px;border:1px solid #7c7c7c;border-bottom:none;border-right-color:#a8a8a8;border-left-color:#8a8a8a;border-radius:3px 3px 0 0;background:linear-gradient(#f6f6f6,#efefef)"></div>
<div class="t " style="left:624.3px;top:173.6px;;letter-spacing:0.17px">Свойства</div>
<div class="a" style="left:706px;top:197px;width:143px;height:1px;background:#a6a6a6"></div>
<div class="a" style="left:848px;top:197px;width:1px;height:307px;background:#c4c4c4"></div>
<div class="a" style="left:619px;top:199px;width:229px;height:302px;border:1px solid #7c7c7c;border-right-color:#a8a8a8;border-bottom-color:#8e8e8e;border-radius:2px;background:#efefef"></div>
<div class="a" style="left:620px;top:200px;width:227px;height:299px;border:1px solid #b8b8b8;border-radius:2px"></div>
<div class="a" style="left:621px;top:201px;width:208px;height:297px;overflow:hidden;background:#fcfcfc">
<div class="a" style="left:0px;top:0px;width:140px;height:26px;background:linear-gradient(#fcfcfc,#f1f1f1 50%,#e0e0e0);border-right:1px solid #b0b0b0;border-bottom:1px solid #9a9a9a;box-shadow:inset 1px 1px 0 #fff"></div>
<div class="a" style="left:140px;top:0px;width:68px;height:26px;background:linear-gradient(#fcfcfc,#f1f1f1 50%,#e0e0e0);border-right:1px solid #b0b0b0;border-bottom:1px solid #9a9a9a;box-shadow:inset 1px 1px 0 #fff;overflow:hidden"></div>
<div class="t" style="left:3.3px;top:4.2px;;letter-spacing:0.10px">Свойство</div>
<div class="t" style="left:145px;top:4.2px;width:62px;overflow:hidden">Значение</div>
<div class="a" style="left:0px;top:26px;width:208px;height:23px;background:#ebf3fd"></div>
<div class="a" style="left:0px;top:49px;width:208px;height:1px;background:#767676"></div>
<div class="a" style="left:0px;top:26px;width:140px;height:24px;background:#d4d4d4;border:1px solid #a8a8a8;border-radius:3px;box-shadow:inset 0 0 0 1px #e4e4e4"></div>
<div class="t" style="left:21.5px;top:28.5px;font-weight:bold;letter-spacing:-0.07px">name</div>
<div class="a" style="left:141px;top:27px;width:53px;height:22px;background:#fff;border:1px solid #9a9a9a;border-radius:3px;overflow:hidden"><div class="t" style="right:4px;top:2px;letter-spacing:-0.55px">CloseButton1</div></div>
<div class="a" style="left:195px;top:28px;width:12px;height:20px;border:1px solid #b4b4b4;border-radius:3px;background:linear-gradient(#fafafa,#e0e0e0)"></div>
<svg class="ic" style="left:197.5px;top:34px" width="8" height="8" viewBox="0 0 8 8"><path d="M1 1l6 6M7 1l-6 6" stroke="#b8b8b8" stroke-width="1.2" fill="none"/></svg>
<div class="a" style="left:0px;top:50px;width:208px;height:23px;background:#fcfcfc"></div>
<div class="a" style="left:0px;top:73px;width:208px;height:1px;background:#767676"></div>
<div class="t" style="left:20.3px;top:52.5px;;letter-spacing:0.17px">enabled</div>
<div class="t" style="left:141.8px;top:52.5px;;letter-spacing:-0.16px">Истина</div>
<div class="a" style="left:0px;top:74px;width:208px;height:23px;background:#ebf3fd"></div>
<div class="a" style="left:0px;top:97px;width:208px;height:1px;background:#767676"></div>
<svg class="ic" style="left:4px;top:82px" width="9" height="9" viewBox="0 0 9 9"><rect x="0.5" y="0.5" width="8" height="8" fill="#fff" stroke="#000"/><path d="M2 4.5h5M4.5 2v5" stroke="#000"/></svg>
<div class="t" style="left:21.5px;top:76.5px;font-weight:bold;letter-spacing:-0.34px">geometry</div>
<div class="t" style="left:141.8px;top:76.5px;;letter-spacing:-0.17px">[ 510, 1...</div>
<div class="a" style="left:0px;top:98px;width:208px;height:23px;background:#fcfcfc"></div>
<div class="a" style="left:0px;top:121px;width:208px;height:1px;background:#767676"></div>
<svg class="ic" style="left:4px;top:106px" width="9" height="9" viewBox="0 0 9 9"><rect x="0.5" y="0.5" width="8" height="8" fill="#fff" stroke="#000"/><path d="M2 4.5h5M4.5 2v5" stroke="#000"/></svg>
<div class="t" style="left:20.3px;top:100.5px;;letter-spacing:0.28px">sizePolicy</div>
<div class="t" style="left:141.8px;top:100.5px;;letter-spacing:-0.15px">Minimu...</div>
<div class="a" style="left:0px;top:122px;width:208px;height:23px;background:#ebf3fd"></div>
<div class="a" style="left:0px;top:145px;width:208px;height:1px;background:#767676"></div>
<svg class="ic" style="left:4px;top:130px" width="9" height="9" viewBox="0 0 9 9"><rect x="0.5" y="0.5" width="8" height="8" fill="#fff" stroke="#000"/><path d="M2 4.5h5M4.5 2v5" stroke="#000"/></svg>
<div class="t" style="left:20.3px;top:124.5px;;letter-spacing:-0.26px">minimumSize</div>
<div class="t" style="left:141.8px;top:124.5px;;letter-spacing:-0.31px">[ 0, 0 ]</div>
<div class="a" style="left:0px;top:146px;width:208px;height:23px;background:#fcfcfc"></div>
<div class="a" style="left:0px;top:169px;width:208px;height:1px;background:#767676"></div>
<svg class="ic" style="left:4px;top:154px" width="9" height="9" viewBox="0 0 9 9"><rect x="0.5" y="0.5" width="8" height="8" fill="#fff" stroke="#000"/><path d="M2 4.5h5M4.5 2v5" stroke="#000"/></svg>
<div class="t" style="left:20.3px;top:148.5px;;letter-spacing:-0.05px">maximumSize</div>
<div class="t" style="left:141.8px;top:148.5px;">[ 32767...</div>
<div class="a" style="left:0px;top:170px;width:208px;height:23px;background:#ebf3fd"></div>
<div class="a" style="left:0px;top:193px;width:208px;height:1px;background:#767676"></div>
<svg class="ic" style="left:4px;top:178px" width="9" height="9" viewBox="0 0 9 9"><rect x="0.5" y="0.5" width="8" height="8" fill="#fff" stroke="#000"/><path d="M2 4.5h5M4.5 2v5" stroke="#000"/></svg>
<div class="t" style="left:20.3px;top:172.5px;;letter-spacing:0.24px">paletteForegro...</div>
<div class="a" style="left:142px;top:172px;width:63px;height:19px;background:#000"></div>
<div class="a" style="left:0px;top:194px;width:208px;height:23px;background:#fcfcfc"></div>
<div class="a" style="left:0px;top:217px;width:208px;height:1px;background:#767676"></div>
<svg class="ic" style="left:4px;top:202px" width="9" height="9" viewBox="0 0 9 9"><rect x="0.5" y="0.5" width="8" height="8" fill="#fff" stroke="#000"/><path d="M2 4.5h5M4.5 2v5" stroke="#000"/></svg>
<div class="t" style="left:20.3px;top:196.5px;;letter-spacing:0.29px">paletteBackgr...</div>
<div class="a" style="left:142px;top:196px;width:63px;height:19px;background:#efefef;border:1px solid #000;box-shadow:inset 0 0 0 1px #d8d8d8"></div>
<div class="a" style="left:0px;top:218px;width:208px;height:23px;background:#ebf3fd"></div>
<div class="a" style="left:0px;top:241px;width:208px;height:1px;background:#767676"></div>
<div class="t" style="left:20.3px;top:220.5px;;letter-spacing:0.29px">paletteBackgr...</div>
<div class="a" style="left:0px;top:242px;width:208px;height:23px;background:#fcfcfc"></div>
<div class="a" style="left:0px;top:265px;width:208px;height:1px;background:#767676"></div>
<div class="t" style="left:20.3px;top:244.5px;">palette</div>
<div class="a" style="left:142px;top:244px;width:63px;height:19px;background:#e8e8e8;border:1px solid #000;box-shadow:inset 0 0 0 1px #d8d8d8"></div>
<div class="a" style="left:0px;top:266px;width:208px;height:23px;background:#ebf3fd"></div>
<div class="a" style="left:0px;top:289px;width:208px;height:1px;background:#767676"></div>
<svg class="ic" style="left:4px;top:274px" width="9" height="9" viewBox="0 0 9 9"><rect x="0.5" y="0.5" width="8" height="8" fill="#fff" stroke="#000"/><path d="M2 4.5h5M4.5 2v5" stroke="#000"/></svg>
<div class="t" style="left:20px;top:268.5px;width:113px;text-align:right">backgroundOri...</div>
<div class="t" style="left:141.8px;top:268.5px;;letter-spacing:0.04px">Widget...</div>
<div class="a" style="left:0px;top:290px;width:208px;height:23px;background:#fcfcfc"></div>
<div class="a" style="left:0px;top:313px;width:208px;height:1px;background:#767676"></div>
<svg class="ic" style="left:4px;top:298px" width="9" height="9" viewBox="0 0 9 9"><rect x="0.5" y="0.5" width="8" height="8" fill="#fff" stroke="#000"/><path d="M2 4.5h5M4.5 2v5" stroke="#000"/></svg>
<div class="t" style="left:20.3px;top:292.5px;">font</div>
<div class="a" style="left:139px;top:26px;width:1px;height:300px;background:#767676"></div>
<div class="a" style="left:207px;top:26px;width:1px;height:300px;background:#767676"></div>
</div>
<div class="a" style="left:830px;top:201px;width:16px;height:297px;background:repeating-conic-gradient(#e5e5e5 0% 25%,#f3f3f3 0% 50%) 0 0/2px 2px;border-left:1px solid #d2d2d2"></div>
<div class="sb" style="left:830px;top:201px;width:15px;height:16px"></div>
<div class="tri" style="left:833.5px;top:207px;border-width:0 4px 4px 4px;border-color:transparent transparent #000 transparent"></div>
<div class="sbh" style="left:830px;top:217px;width:15px;height:86px"></div>
<div class="a" style="left:834px;top:252px;width:8px;height:16px;background-image:radial-gradient(circle at 1px 1px,#b8b8b8 0.8px,transparent 1.1px),radial-gradient(circle at 2px 2px,#fff 0.8px,transparent 1.1px);background-size:4px 4px"></div>
<div class="sb" style="left:830px;top:466px;width:15px;height:16px"></div>
<div class="tri" style="left:833.5px;top:472px;border-width:0 4px 4px 4px;border-color:transparent transparent #000 transparent"></div>
<div class="sb" style="left:830px;top:481px;width:15px;height:16px"></div>
<div class="tri" style="left:833.5px;top:487px;border-width:4px 4px 0 4px;border-color:#000 transparent transparent transparent"></div>
<div class="a" style="left:4px;top:505px;width:845px;height:1px;background:#c0c0c0"></div>
<div class="a" style="left:4px;top:506px;width:845px;height:1px;background:#9a9a9a"></div>
<svg class="a" style="left:7px;top:511px" width="816" height="5"><rect width="816" height="5" fill="url(#hp)"/></svg>
<svg class="ic" style="left:827px;top:508px" width="8" height="8" viewBox="0 0 8 8"><path d="M1.5 6V1.5H6M1.5 1.5L6.5 6.5" stroke="#000" stroke-width="1" fill="none"/></svg>
<svg class="ic" style="left:839px;top:508px" width="9" height="9" viewBox="0 0 9 9"><path d="M1 1l7 7M8 1l-7 7" stroke="#000" stroke-width="1.7" fill="none"/></svg>
<div class="a" style="left:70px;top:522px;width:62px;height:27px;border:1px solid #b4b4b4;border-bottom:none;border-radius:3px 3px 0 0;background:linear-gradient(#f6f6f6,#e2e2e2)"></div>
<div class="a" style="left:70px;top:548px;width:779px;height:1px;background:#a2a2a2"></div>
<div class="a" style="left:4px;top:519px;width:67px;height:31px;border:1px solid #8e8e8e;border-bottom:none;border-radius:3px 3px 0 0;background:linear-gradient(#f6f6f6,#efefef)"></div>
<div class="t " style="left:12.2px;top:525px;;letter-spacing:-0.16px"><u>S</u>tdout</div>
<div class="t " style="left:79.3px;top:526px;">S<u>t</u>derr</div>
<div class="a" style="left:6px;top:550px;width:842px;height:81px;border:1px solid #8a8a8a;border-radius:3px;background:#fff;box-shadow:0 1px 0 #fff, inset 0 1px 0 #d8d8d8"></div>
<div class="a" style="left:848px;top:549px;width:1px;height:84px;background:#c4c4c4"></div>
<div class="t " style="left:10.6px;top:638px;;letter-spacing:-0.30px">Изменить связи.</div>
<svg class="ic" style="left:836px;top:647px" width="13" height="13" viewBox="0 0 13 13"><path d="M1.5 13L13 1.5" stroke="#555" stroke-width="1"/><path d="M2.5 13L13 2.5" stroke="#fff" stroke-width="1"/><path d="M4.5 13L13 4.5" stroke="#555" stroke-width="1"/><path d="M5.5 13L13 5.5" stroke="#fff" stroke-width="1"/><path d="M7.5 13L13 7.5" stroke="#555" stroke-width="1"/><path d="M8.5 13L13 8.5" stroke="#fff" stroke-width="1"/><path d="M10.5 13L13 10.5" stroke="#555" stroke-width="1"/><path d="M11.5 13L13 11.5" stroke="#fff" stroke-width="1"/></svg>
<div class="a" style="left:124px;top:416px;width:592px;height:352px;border-radius:6px 6px 0 0;background:#48598a;border:1px solid #181e4c"></div>
<div class="a" style="left:125px;top:417px;width:590px;height:28px;border-radius:5px 5px 0 0;background:linear-gradient(#8eb0f2,#82a8f4 8%,#6088dc 27%,#4a72cc 49%,#2c58b8 52%,#3a66c2 72%,#4272cc 90%,#4e72b4 97%,#4a6aa6)"></div>
<div class="a" style="left:125px;top:445px;width:2px;height:321px;background:#48598a"></div>
<div class="a" style="left:127px;top:445px;width:1px;height:319px;background:#12265a"></div>
<div class="a" style="left:712px;top:445px;width:1px;height:319px;background:#1c2458"></div>
<div class="a" style="left:713px;top:445px;width:2px;height:321px;background:#485a8c"></div>
<div class="a" style="left:715px;top:445px;width:1px;height:321px;background:#1a2860"></div>
<div class="a" style="left:128px;top:445px;width:584px;height:318px;background:#efefef;box-shadow:inset 0 1px 0 #eaf0fc"></div>
<div class="a" style="left:128px;top:763px;width:585px;height:1px;background:#14285c"></div>
<div class="a" style="left:125px;top:764px;width:590px;height:2px;background:#3e56a6"></div>
<svg class="ic" style="left:134px;top:423px" width="15" height="16" viewBox="0 0 15 16"><path d="M0.5 0.5h14v11l-4 4h-10z" fill="#fcfcfc" stroke="#e8ecf8"/><path d="M14.5 11.5h-4v4z" fill="#d8dcec"/></svg>
<div class="t " style="left:159px;top:423px;font-weight:bold;color:#fff;letter-spacing:0.43px">Связи</div>
<svg class="ic" style="left:205px;top:419px" width="23" height="22" viewBox="0 0 23 22"><circle cx="11.500" cy="11" r="9.300" fill="none" stroke="#eef2fc" stroke-width="1" opacity=".92"/><circle cx="12.300" cy="7.300" r="3" fill="none" stroke="#eef2fc" stroke-width=".9"/><circle cx="12.300" cy="7.300" r="1.100" fill="none" stroke="#eef2fc" stroke-width=".8"/><path d="M2.200 10.500c4 5.500 13 6 18.800-1c-4.500 4.500-12.500 5-18.800 1z" fill="#f4f6fe"/></svg>
<div class="a" style="left:629px;top:420px;width:22px;height:22px;border:1px solid #274c9c;border-radius:3px;background:linear-gradient(#5a86dc,#3c68c0);box-shadow:inset 0 0 0 1px rgba(140,170,235,.55)"></div>
<div class="t " style="left:635.5px;top:423px;font-weight:bold;color:#0c1c50;font-size:14px">?</div>
<div class="a" style="left:652px;top:420px;width:22px;height:22px;border:1px solid #274c9c;border-radius:3px;background:linear-gradient(#5a86dc,#3c68c0);box-shadow:inset 0 0 0 1px rgba(140,170,235,.55)"></div>
<svg class="ic" style="left:652.5px;top:420.5px" width="21" height="21" viewBox="0 0 21 21"><rect x="6.5" y="6.5" width="8" height="8" fill="none" stroke="#0c1c50"/><rect x="6" y="6" width="9" height="2" fill="#0c1c50"/></svg>
<div class="a" style="left:688px;top:420px;width:22px;height:22px;border:1px solid #274c9c;border-radius:3px;background:linear-gradient(#5a86dc,#3c68c0);box-shadow:inset 0 0 0 1px rgba(140,170,235,.55)"></div>
<svg class="ic" style="left:688.5px;top:420.5px" width="21" height="21" viewBox="0 0 21 21"><path d="M6.5 6.5l8 8M14.5 6.5l-8 8" stroke="#0c1c50" stroke-width="1.6"/></svg>
<div class="t " style="left:139.5px;top:460px;;letter-spacing:-0.14px">Си<u>г</u>налы:</div>
<div class="t " style="left:355px;top:460px;;letter-spacing:0.42px"><u>С</u>лоты:</div>
<div class="btn" style="left:211px;top:456px;width:138px;height:26px"></div>
<div class="a" style="left:332px;top:458px;width:1px;height:22px;background:#b4b4b4"></div>
<div class="a" style="left:333px;top:458px;width:1px;height:22px;background:#fff"></div>
<div class="tri" style="left:337px;top:468px;border-width:4px 4px 0 4px;border-color:#000 transparent transparent transparent"></div>
<div class="t " style="left:217px;top:460px;;letter-spacing:0.07px">CloseButton1</div>
<div class="btn" style="left:413px;top:456px;width:151px;height:26px"></div>
<div class="a" style="left:547px;top:458px;width:1px;height:22px;background:#b4b4b4"></div>
<div class="a" style="left:548px;top:458px;width:1px;height:22px;background:#fff"></div>
<div class="tri" style="left:552px;top:468px;border-width:4px 4px 0 4px;border-color:#000 transparent transparent transparent"></div>
<div class="t " style="left:419px;top:460px;;letter-spacing:0.32px">Form1</div>
<div class="a" style="left:140px;top:489px;width:208px;height:92px;border:1px solid #8a8a8a;border-radius:3px;background:#fff;box-shadow:0 1px 0 #fff"></div>
<div class="a" style="left:141px;top:490px;width:190px;height:73px;overflow:hidden">
<div class="a" style="left:0;top:0px;width:190px;height:22px;background:#457bd0;color:#fff;"><div class="t" style="left:3px;top:2px">clicked()</div></div>
<div class="a" style="left:0;top:22px;width:190px;height:22px;"><div class="t" style="left:3px;top:2px;letter-spacing:0.53px">pressed()</div></div>
<div class="a" style="left:0;top:44px;width:190px;height:22px;"><div class="t" style="left:3px;top:2px;letter-spacing:0.34px">released()</div></div>
<div class="a" style="left:0;top:66px;width:190px;height:22px;"><div class="t" style="left:3px;top:2px">stateChanged(int)</div></div>
</div>
<div class="a" style="left:331px;top:490px;width:16px;height:73px;background:repeating-conic-gradient(#e5e5e5 0% 25%,#f3f3f3 0% 50%) 0 0/2px 2px;border-left:1px solid #d6d6d6"></div>
<div class="sb" style="left:331px;top:490px;width:16px;height:16px"></div>
<div class="tri" style="left:335px;top:496px;border-width:0 4px 4px 4px;border-color:transparent transparent #000 transparent"></div>
<div class="sbh" style="left:331px;top:505px;width:16px;height:23px"></div>
<div class="a" style="left:335px;top:511px;width:8px;height:12px;background-image:radial-gradient(circle at 1px 1px,#b8b8b8 0.8px,transparent 1.1px),radial-gradient(circle at 2px 2px,#fff 0.8px,transparent 1.1px);background-size:4px 4px"></div>
<div class="sb" style="left:331px;top:532px;width:16px;height:16px"></div>
<div class="tri" style="left:335px;top:538px;border-width:0 4px 4px 4px;border-color:transparent transparent #000 transparent"></div>
<div class="sb" style="left:331px;top:547px;width:16px;height:16px"></div>
<div class="tri" style="left:335px;top:553px;border-width:4px 4px 0 4px;border-color:#000 transparent transparent transparent"></div>
<div class="a" style="left:141px;top:563px;width:206px;height:17px;background:repeating-conic-gradient(#e5e5e5 0% 25%,#f3f3f3 0% 50%) 0 0/2px 2px;border-top:1px solid #d6d6d6"></div>
<div class="a" style="left:331px;top:563px;width:16px;height:17px;background:#efefef"></div>
<div class="sb" style="left:141px;top:564px;width:16px;height:16px"></div>
<div class="tri" style="left:146px;top:568px;border-width:4px 4px 4px 0;border-color:transparent #000 transparent transparent"></div>
<div class="sb" style="left:156px;top:564px;width:106px;height:16px"></div>
<div class="a" style="left:202px;top:568px;width:16px;height:8px;background-image:radial-gradient(circle at 1px 1px,#b8b8b8 0.8px,transparent 1.1px),radial-gradient(circle at 2px 2px,#fff 0.8px,transparent 1.1px);background-size:4px 4px"></div>
<div class="sb" style="left:299px;top:564px;width:16px;height:16px"></div>
<div class="tri" style="left:304px;top:568px;border-width:4px 4px 4px 0;border-color:transparent #000 transparent transparent"></div>
<div class="sb" style="left:314px;top:564px;width:16px;height:16px"></div>
<div class="tri" style="left:320px;top:568px;border-width:4px 0 4px 4px;border-color:transparent transparent transparent #000"></div>
<div class="a" style="left:355px;top:489px;width:208px;height:92px;border:1px solid #8a8a8a;border-radius:3px;background:#fff;box-shadow:0 1px 0 #fff"></div>
<div class="a" style="left:356px;top:490px;width:190px;height:90px;overflow:hidden">
<div class="a" style="left:0;top:0px;width:190px;height:22px;"><div class="t" style="left:4px;top:2px;letter-spacing:0.14px">accept()</div></div>
<div class="a" style="left:0;top:22px;width:190px;height:22px;"><div class="t" style="left:4px;top:2px">adjustSize()</div></div>
<div class="a" style="left:0;top:44px;width:190px;height:22px;background:#457bd0;color:#fff;"><div class="t" style="left:4px;top:2px;letter-spacing:0.23px">close()</div></div>
<div class="a" style="left:0;top:66px;width:190px;height:22px;"><div class="t" style="left:4px;top:2px;letter-spacing:0.42px">exec()</div></div>
</div>
<div class="a" style="left:546px;top:490px;width:16px;height:90px;background:repeating-conic-gradient(#e5e5e5 0% 25%,#f3f3f3 0% 50%) 0 0/2px 2px;border-left:1px solid #d6d6d6"></div>
<div class="sb" style="left:546px;top:490px;width:16px;height:16px"></div>
<div class="tri" style="left:550px;top:496px;border-width:0 4px 4px 4px;border-color:transparent transparent #000 transparent"></div>
<div class="sbh" style="left:546px;top:505px;width:16px;height:23px"></div>
<div class="a" style="left:550px;top:511px;width:8px;height:12px;background-image:radial-gradient(circle at 1px 1px,#b8b8b8 0.8px,transparent 1.1px),radial-gradient(circle at 2px 2px,#fff 0.8px,transparent 1.1px);background-size:4px 4px"></div>
<div class="sb" style="left:546px;top:547.5px;width:16px;height:16px"></div>
<div class="tri" style="left:550px;top:553.5px;border-width:0 4px 4px 4px;border-color:transparent transparent #000 transparent"></div>
<div class="sb" style="left:546px;top:562.5px;width:16px;height:16px"></div>
<div class="tri" style="left:550px;top:568.5px;border-width:4px 4px 0 4px;border-color:#000 transparent transparent transparent"></div>
<div class="btn" style="left:570px;top:488px;width:131px;height:28px;border-color:#b4b4b4;background:linear-gradient(#f6f6f6,#ececec)"></div>
<div class="t " style="left:606.3px;top:492.6px;color:#b6b6b6;text-shadow:1px 1px 0 #fff;letter-spacing:-0.05px">Связат<u>ь</u></div>
<div class="btn" style="left:570px;top:612px;width:131px;height:28px"></div>
<div class="t " style="left:584px;top:616.7px;;letter-spacing:-0.07px"><u>У</u>далить связь</div>
<div class="t " style="left:139.3px;top:587px;">Свя<u>з</u>и:</div>
<div class="a" style="left:140px;top:613px;width:424px;height:105px;border:1px solid #8a8a8a;border-radius:3px;background:#fff;box-shadow:0 1px 0 #fff"></div>
<div class="hd" style="left:141px;top:614px;width:132px;height:26px"></div>
<div class="t " style="left:145px;top:617.5px;;letter-spacing:-0.19px">Отправитель</div>
<div class="hd" style="left:273px;top:614px;width:91px;height:26px"></div>
<div class="t " style="left:278.5px;top:617.5px;;letter-spacing:-0.40px">Сигнал</div>
<div class="hd" style="left:364px;top:614px;width:125px;height:26px"></div>
<div class="t " style="left:369px;top:617.5px;;letter-spacing:0.22px">Получатель</div>
<div class="hd" style="left:489px;top:614px;width:74px;height:26px"></div>
<div class="t " style="left:494px;top:617.5px;;letter-spacing:0.33px">Слот</div>
<div class="tri" style="left:254px;top:627px;border-width:4px 4px 0 4px;border-color:#000 transparent transparent transparent"></div>
<div class="a" style="left:141px;top:640px;width:422px;height:24px;background:#457bd0"></div>
<svg class="ic" style="left:142px;top:644.5px" width="22" height="19" viewBox="0 0 22 19"><rect x="12" y="4.500" width="9.500" height="10" fill="#98b820" stroke="#181c00"/><path d="M0.500 4.500h6v-4l9 8.750l-9 8.750v-4h-6z" fill="#e41414" stroke="#300000" stroke-linejoin="round"/><path d="M1.500 5.500h6v-3" stroke="#ff7070" stroke-width=".8" fill="none" opacity=".7"/></svg>
<div class="t " style="left:165px;top:642.5px;color:#fff;letter-spacing:0.07px">CloseButton1</div>
<div class="t " style="left:274.5px;top:642.5px;color:#fff">clicked()</div>
<div class="t " style="left:366px;top:642.5px;color:#fff;letter-spacing:0.32px">Form1</div>
<div class="t " style="left:491px;top:642.5px;color:#fff;letter-spacing:0.23px">close()</div>
<div class="btn" style="left:281px;top:725px;width:50px;height:27px;border-color:#7e7e7e;box-shadow:inset 0 0 0 1px rgba(255,255,255,.75),0 0 0 1px rgba(0,0,0,.07)"></div>
<div class="t " style="left:294.2px;top:728.6px;;letter-spacing:1.20px"><u>О</u>К</div>
<div class="btn" style="left:338px;top:724px;width:85px;height:28px"></div>
<div class="t " style="left:352px;top:728.6px;;letter-spacing:0.04px">О<u>т</u>мена</div>
<svg class="ic" style="left:699px;top:750px" width="13" height="13" viewBox="0 0 13 13"><path d="M1.5 13L13 1.5" stroke="#555" stroke-width="1"/><path d="M2.5 13L13 2.5" stroke="#fff" stroke-width="1"/><path d="M4.5 13L13 4.5" stroke="#555" stroke-width="1"/><path d="M5.5 13L13 5.5" stroke="#fff" stroke-width="1"/><path d="M7.5 13L13 7.5" stroke="#555" stroke-width="1"/><path d="M8.5 13L13 8.5" stroke="#fff" stroke-width="1"/><path d="M10.5 13L13 10.5" stroke="#555" stroke-width="1"/><path d="M11.5 13L13 11.5" stroke="#fff" stroke-width="1"/></svg>
</div>
</body></html>
